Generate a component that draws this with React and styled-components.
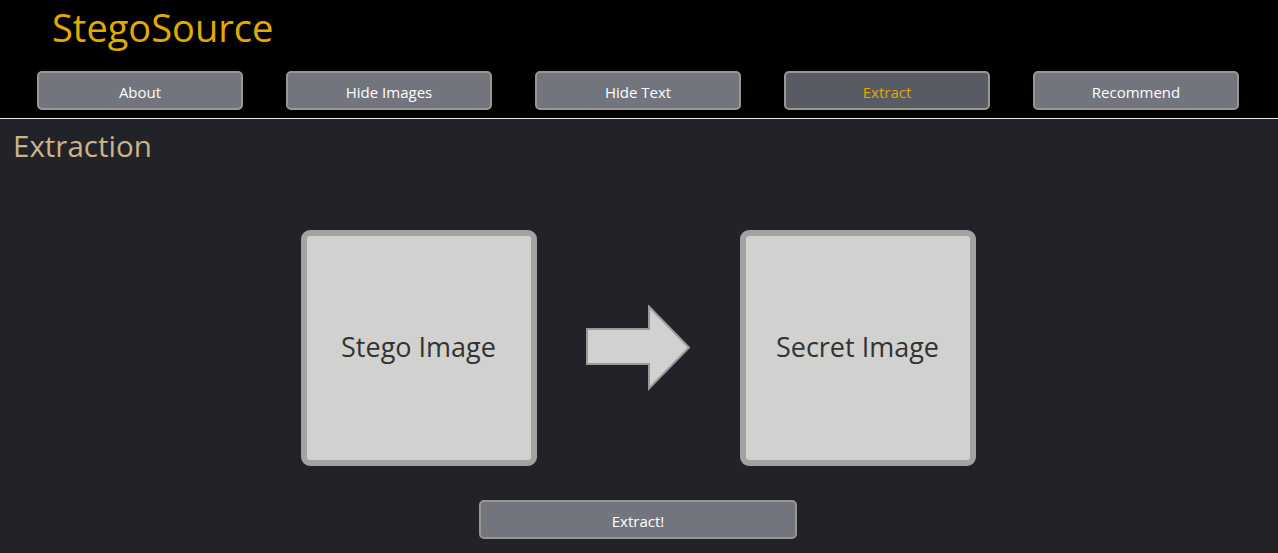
import React from "react";
import styled, { createGlobalStyle } from "styled-components";

const Global = createGlobalStyle`
  html, body { margin: 0; padding: 0; background: #212328; }
  body { font-family: "Open Sans", "Noto Sans", sans-serif; }
  * { box-sizing: border-box; }
`;

const Header = styled.header`
  background: #000;
  border-bottom: 1px solid #e6e6e6;
  padding: 4px 0 8px;
`;

const Title = styled.h1`
  margin: 0 0 0 52px;
  font-weight: 400;
  font-size: 38px;
  line-height: 46px;
  color: #e3a900;
`;

const Nav = styled.nav`
  display: flex;
  gap: 43px;
  padding: 0 37px;
  margin-top: 21px;
`;

const NavButton = styled.button`
  width: 206px;
  height: 39px;
  border: 2px solid #9a9692;
  border-radius: 5px;
  background: ${(p) => (p.$active ? "#585b63" : "#72757d")};
  color: ${(p) => (p.$active ? "#e0a800" : "#fff")};
  font-family: inherit;
  font-size: 15px;
  padding: 2px 0 0;
`;

const Main = styled.main`
  padding: 8px 13px 0;
  height: 434px;
`;

const Heading = styled.h2`
  margin: 0;
  font-weight: 400;
  font-size: 29.5px;
  line-height: 38px;
  color: #cdb38a;
`;

const Stage = styled.div`
  display: flex;
  justify-content: center;
  align-items: center;
  gap: 49px;
  margin-top: 65px;
  padding-right: 2px;
`;

const ImageBox = styled.div`
  width: 236px;
  height: 236px;
  border: 6px solid #a3a3a3;
  border-radius: 9px;
  background: #d1d1cf;
  display: flex;
  align-items: center;
  justify-content: center;
  color: #333;
  font-size: 27px;
  padding-bottom: 4px;
`;

const Arrow = styled.svg`
  display: block;
  width: 105px;
  height: 86px;
`;

const Actions = styled.div`
  display: flex;
  justify-content: center;
  margin-top: 34px;
  padding-right: 2px;
`;

const ActionButton = styled(NavButton)`
  width: 318px;
`;

const tabs = ["About", "Hide Images", "Hide Text", "Extract", "Recommend"];

export default function App() {
  return (
    <>
      <Global />
      <Header>
        <Title>StegoSource</Title>
        <Nav>
          {tabs.map((t) => (
            <NavButton key={t} $active={t === "Extract"}>
              {t}
            </NavButton>
          ))}
        </Nav>
      </Header>
      <Main>
        <Heading>Extraction</Heading>
        <Stage>
          <ImageBox>Stego Image</ImageBox>
          <Arrow viewBox="0 0 105 86">
            <path
              d="M1 24 H63 V1.5 L103 42.5 L63 83.5 V59 H1 Z"
              fill="#d1d1cf"
              stroke="#9a9a9a"
              strokeWidth="2"
              strokeLinejoin="miter"
            />
          </Arrow>
          <ImageBox>Secret Image</ImageBox>
        </Stage>
        <Actions>
          <ActionButton>Extract!</ActionButton>
        </Actions>
      </Main>
    </>
  );
}
